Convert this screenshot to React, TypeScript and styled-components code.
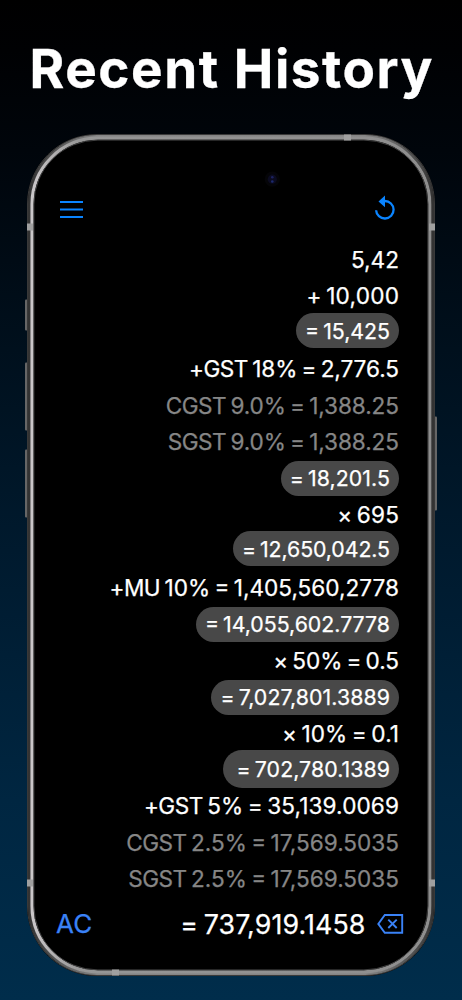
import React from 'react';
import styled, { createGlobalStyle } from 'styled-components';

const Global = createGlobalStyle`
  body { margin: 0; background: #002c49; }
  * { box-sizing: border-box; }
`;

const Page = styled.main`
  width: 462px;
  height: 1000px;
  padding-top: 34px;
  overflow: hidden;
  background: linear-gradient(180deg, #000 0%, #000103 5%, #00050b 15%, #00101d 35%, #001a2e 55%, #002641 80%, #002d4b 100%);
  color: #fff;
  font-family: Inter, sans-serif;
`;

const Title = styled.h1`
  margin: 0 0 0 29.5px;
  height: 99.5px;
  font-size: 53px;
  line-height: 70px;
  font-weight: 700;
  letter-spacing: 1.55px;
  white-space: nowrap;
  -webkit-text-stroke: 0.3px currentColor;
`;

const Phone = styled.section`
  position: relative;
  width: 408px;
  height: 842px;
  margin-left: 27px;
  border-radius: 70px;
  background: #000;
`;

const Chassis = styled.svg`
  position: absolute;
  left: -3px;
  top: 0;
`;

const Screen = styled.div`
  position: relative;
  height: 842px;
  padding: 60px 28px 0 30px;
  display: flex;
  flex-direction: column;
  -webkit-text-stroke: 0.25px currentColor;
`;

const Toolbar = styled.header`
  display: flex;
  justify-content: space-between;
  height: 47.7px;
`;

const History = styled.div`
  display: flex;
  flex-direction: column;
  padding-right: 8px;
`;

const Entry = styled.div<{ $muted?: boolean }>`
  display: flex;
  justify-content: flex-end;
  align-items: center;
  height: 36.44px;
  font-size: 22.6px;
  white-space: nowrap;
  color: ${p => (p.$muted ? '#868686' : '#fff')};
`;

const Label = styled.span<{ $track: number }>`
  letter-spacing: ${p => p.$track}px;
  margin-right: ${p => -p.$track}px;
  word-spacing: -2px;
`;

const Tag = styled.span`
  letter-spacing: -0.5px;
`;

const Result = styled.div<{ $shift: number; $lead: number; $tall?: boolean }>`
  display: flex;
  align-items: center;
  flex: none;
  height: ${p => (p.$tall ? 37.5 : 35)}px;
  padding: 0 9px 0 ${p => p.$lead}px;
  margin-top: ${p => p.$shift * 2}px;
  border-radius: 19px;
  background: #484848;
  font-size: 21.3px;
`;

const Footer = styled.footer`
  display: flex;
  align-items: center;
  height: 53.5px;
  font-size: 26.8px;
  white-space: nowrap;
`;

const Clear = styled.span`
  margin-left: -1px;
  color: #3a82f7;
  font-size: 26px;
  letter-spacing: 0.3px;
`;

const Total = styled.span`
  margin-left: auto;
  margin-right: 11.5px;
  letter-spacing: 0.1px;
  word-spacing: -2px;
`;

type Line = { tag?: string; text: string; track?: number; muted?: boolean; pill?: boolean; shift?: number; lead?: number; tall?: boolean };

const lines: Line[] = [
  { text: '5,42' },
  { text: '+ 10,000', track: 0.25 },
  { text: '= 15,425', pill: true, shift: -1.4 },
  { tag: '+GST', text: ' 18% = 2,776.5', track: -0.08 },
  { tag: 'CGST', text: ' 9.0% = 1,388.25', muted: true, track: -0.1 },
  { tag: 'SGST', text: ' 9.0% = 1,388.25', muted: true, track: -0.1 },
  { text: '= 18,201.5', pill: true, track: 0.1 },
  { text: '× 695', track: 0.2 },
  { text: '= 12,650,042.5', pill: true, shift: -2.3, track: -0.08 },
  { tag: '+MU', text: ' 10% = 1,405,560,2778' },
  { text: '= 14,055,602.7778', pill: true, shift: 0.6 },
  { text: '× 50% = 0.5', track: -0.1 },
  { text: '= 7,027,801.3889', pill: true, shift: 0.4, track: 0.1 },
  { text: '× 10% = 0.1', track: 0.1 },
  { text: '= 702,780.1389', pill: true, shift: -0.4, lead: 14, tall: true, track: 0.08 },
  { tag: '+GST', text: ' 5% = 35,139.0069', track: 0.1 },
  { tag: 'CGST', text: ' 2.5% = 17,569.5035', muted: true },
  { tag: 'SGST', text: ' 2.5% = 17,569.5035', muted: true },
];

function Frame() {
  return (
    <Chassis width="414" height="842" viewBox="24 133.5 414 842">
      <defs>
        <linearGradient id="edge" x1="0" x2="1" y1="0" y2="0">
          <stop offset="0" stopColor="#333" />
          <stop offset="0.03" stopColor="#444" />
          <stop offset="0.17" stopColor="#858585" />
          <stop offset="0.83" stopColor="#858585" />
          <stop offset="0.97" stopColor="#484848" />
          <stop offset="1" stopColor="#333" />
        </linearGradient>
        <linearGradient id="metal" x1="0" x2="1" y1="0" y2="0">
          <stop offset="0" stopColor="#c9c6c8" />
          <stop offset="0.12" stopColor="#969696" />
          <stop offset="1" stopColor="#8e8e8e" />
        </linearGradient>
      </defs>
      <g fill="#666">
        <rect x="25" y="299" width="2.5" height="31" rx="1" />
        <rect x="25" y="362" width="2.5" height="68" rx="1" />
        <rect x="25" y="449" width="2.5" height="68" rx="1" />
        <rect x="434.5" y="416" width="2.5" height="94" rx="1" />
      </g>
      <rect x="27.5" y="134" width="407" height="841" rx="69.5" fill="none" stroke="#3a3a3a" strokeWidth="1" />
      <rect x="29.3" y="135.8" width="403.4" height="837.4" rx="67.7" fill="none" stroke="url(#edge)" strokeWidth="2.8" />
      <rect x="32" y="137.7" width="397.8" height="833.6" rx="66" fill="none" stroke="url(#metal)" strokeWidth="3.2" />
      <rect x="33.9" y="139.6" width="394" height="829.8" rx="64" fill="none" stroke="#484848" strokeWidth="0.9" />
      <g fill="#a0a0a0">
        <rect x="27" y="223" width="6" height="7" />
        <rect x="429" y="223" width="6" height="7" />
        <rect x="27" y="879" width="6" height="7" />
        <rect x="429" y="879" width="6" height="7" />
        <rect x="344" y="134" width="7" height="6" />
        <rect x="112" y="969" width="7" height="6" />
      </g>
      <circle cx="272.3" cy="178.7" r="7.6" fill="#050508" />
      <circle cx="272.3" cy="178.7" r="4.6" fill="#0b0b20" />
      <circle cx="272.3" cy="176.8" r="1.3" fill="#1c2260" />
      <circle cx="272.3" cy="181" r="1.3" fill="#1c2a70" />
    </Chassis>
  );
}

export default function App() {
  return (
    <Page>
      <Global />
      <Title>Recent History</Title>
      <Phone>
        <Frame />
        <Screen>
          <Toolbar>
            <svg width="30" height="30" viewBox="57 193.5 30 30" stroke="#0a84ff" strokeWidth="1.9">
              <path d="M60 201.5h23M60 209h23M60 216.5h23" />
            </svg>
            <svg width="34" height="34" viewBox="373 193.5 34 34">
              <path d="M376.1 209.7a8.75 8.75 0 1 0 8.7-9.2" fill="none" stroke="#0a84ff" strokeWidth="2.3" />
              <path d="M385 195v11.8l-6.5-5.8z" fill="#0a84ff" />
            </svg>
          </Toolbar>
          <History>
            {lines.map((l, i) => (
              <Entry key={i} $muted={l.muted}>
                {l.pill ? (
                  <Result $shift={l.shift ?? 0} $lead={l.lead ?? 9} $tall={l.tall}>
                    <Label $track={l.track ?? 0}>{l.text}</Label>
                  </Result>
                ) : (
                  <Label $track={l.track ?? 0}>
                    {l.tag && <Tag>{l.tag}</Tag>}
                    {l.text}
                  </Label>
                )}
              </Entry>
            ))}
          </History>
          <Footer>
            <Clear>AC</Clear>
            <Total>= 737,919.1458</Total>
            <svg width="30" height="24" viewBox="377 912 30 24" fill="none" stroke="#3a82f7" strokeWidth="1.9">
              <path d="M384.8 915h17.4v17.7h-17.4l-6.5-8.8zM388.3 919.6l8.4 8.4M396.7 919.6l-8.4 8.4" />
            </svg>
          </Footer>
        </Screen>
      </Phone>
    </Page>
  );
}
